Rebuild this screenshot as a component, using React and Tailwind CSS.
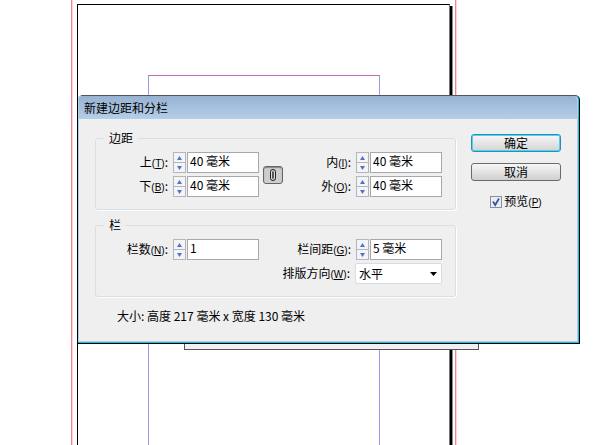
import React from "react";

function Arrow({ down }) {
  return (
    <svg viewBox="0 0 7 4" width="7" height="4" aria-hidden="true">
      <path d={down ? "M1 0H6L3.5 4Z" : "M1 4H6L3.5 0Z"} fill="#5272c4" />
    </svg>
  );
}

function Label({ htmlFor, text, hotkey, colon = true }) {
  return (
    <label htmlFor={htmlFor} className="flex items-baseline whitespace-nowrap">
      {text}
      <span className="font-['Liberation_Sans',sans-serif] text-[10px]">
        (<u>{hotkey}</u>)
      </span>
      {colon && ":"}
    </label>
  );
}

function SpinField({ id, text, hotkey, value }) {
  return (
    <div className="flex items-center justify-end gap-[5px]">
      <Label htmlFor={id} text={text} hotkey={hotkey} />
      <div className="flex h-[21px] gap-px">
        <div className="flex w-[13px] flex-col border border-[#b3b6bd] bg-[#f4f4f6]">
          <button
            type="button"
            aria-label="+"
            className="flex flex-1 items-center justify-center border-b border-[#b3b6bd]"
          >
            <Arrow />
          </button>
          <button
            type="button"
            aria-label="-"
            className="flex flex-1 items-center justify-center"
          >
            <Arrow down />
          </button>
        </div>
        <input
          id={id}
          type="text"
          defaultValue={value}
          className="w-[72px] border border-[#a6a8ad] bg-white pb-[3px] pl-[2px] outline-none"
        />
      </div>
    </div>
  );
}

function Group({ title, children }) {
  return (
    <fieldset className="flex h-20 rounded-[3px] border border-[#d5dfe5] pl-2 pr-[13px] shadow-[1px_1px_0_#fff]">
      <legend className="px-[5px] leading-4">{title}</legend>
      <div className="flex flex-1 items-start pt-[6px]">{children}</div>
    </fieldset>
  );
}

function DocumentPage() {
  return (
    <div className="absolute inset-0" aria-hidden="true">
      <div className="absolute inset-y-0 left-[71px] w-[385px] border-x border-[#ee8592] shadow-[inset_1px_0_0_#fbd3d8,1px_0_0_#fbd3d8]" />
      <div className="absolute bottom-0 left-[450px] top-[6px] w-[3px] border-r border-[#8a8a8a] bg-black" />
      <div className="absolute bottom-0 left-[77px] top-1 w-[373px] border-x border-t border-black border-r-[#777] bg-white" />
      <div className="absolute bottom-0 left-[148px] top-[75px] w-[232px] border-x border-t border-x-[#9a9af0] border-t-[#c868b0]" />
      <div className="absolute left-[184px] top-[340px] h-[10px] w-[295px] border border-[#555] bg-[#f0f0f0]" />
    </div>
  );
}

export default function App() {
  return (
    <main className="relative min-h-screen overflow-hidden bg-white font-['Noto_Sans_CJK_SC',sans-serif] text-[12px] leading-4 text-black">
      <DocumentPage />
      <form className="absolute left-[78px] right-5 top-[95px] rounded-t-[5px] border-b border-r border-t border-black border-t-[#555] bg-[#15bde0] pb-px pr-px">
        <div className="overflow-hidden rounded-t-[4px] border-x border-b border-[#b4cfe8] bg-[#efefef]">
          <h1 className="h-[23px] bg-linear-to-b from-[#97b2d1] to-[#b5cfea] pl-[5px] leading-[24px]">
            新建边距和分栏
          </h1>
          <div className="flex px-4 pb-[17px] pt-[11px]">
            <div className="flex flex-1 flex-col gap-[7px]">
              <Group title="边距">
                <div className="flex w-[155px] flex-col gap-[3px]">
                  <SpinField id="top" text="上" hotkey="T" value="40 毫米" />
                  <SpinField id="bottom" text="下" hotkey="B" value="40 毫米" />
                </div>
                <button
                  type="button"
                  aria-label="链接"
                  className="ml-1 mt-[14px] flex h-[18px] w-5 items-center justify-center rounded-[3px] border border-[#666] bg-[#cdcdcd] shadow-[inset_0_1px_1px_#888]"
                >
                  <svg viewBox="0 0 8 14" width="8" height="14" fill="none">
                    <path
                      d="M1.5 8V3.5Q1.5 1.5 4 1.5T6.5 3.5V8M1.5 6V10.5Q1.5 12.5 4 12.5T6.5 10.5V6"
                      stroke="#222"
                    />
                    <path d="M3 4V10M5 4V10" stroke="#eee" />
                    <path d="M4 3.5V10.5" stroke="#000" strokeWidth="1.2" />
                  </svg>
                </button>
                <div className="flex flex-1 flex-col gap-[3px]">
                  <SpinField id="inside" text="内" hotkey="I" value="40 毫米" />
                  <SpinField id="outside" text="外" hotkey="O" value="40 毫米" />
                </div>
              </Group>
              <Group title="栏">
                <div className="w-[155px]">
                  <SpinField id="columns" text="栏数" hotkey="N" value="1" />
                </div>
                <div className="flex flex-1 flex-col gap-[3px]">
                  <SpinField id="gutter" text="栏间距" hotkey="G" value="5 毫米" />
                  <div className="flex items-center justify-end gap-[5px]">
                    <Label htmlFor="direction" text="排版方向" hotkey="W" />
                    <div className="relative">
                      <select
                        id="direction"
                        className="block h-[21px] w-[87px] appearance-none rounded-[2px] border border-[#d5dde5] bg-white pl-[3px] outline-none"
                      >
                        <option>水平</option>
                      </select>
                      <svg
                        viewBox="0 0 7 4"
                        width="7"
                        height="4"
                        className="pointer-events-none absolute right-[5px] top-[9px]"
                      >
                        <path d="M0 0H7L3.5 4Z" fill="#000" />
                      </svg>
                    </div>
                  </div>
                </div>
              </Group>
              <p className="pl-[22px] pt-1">大小: 高度 217 毫米 x 宽度 130 毫米</p>
            </div>
            <div className="ml-[15px] flex w-[90px] flex-col items-center pt-1">
              <button
                type="submit"
                className="h-[18px] w-full rounded-[3px] border border-[#2b8fb5] bg-linear-to-b from-[#f7f7f7] to-[#d4d4d4] leading-none shadow-[inset_0_0_0_1px_#4cd3f3]"
              >
                确定
              </button>
              <button
                type="button"
                className="mt-[11px] h-[18px] w-full rounded-[3px] border border-[#6b6b6b] bg-linear-to-b from-[#f7f7f7] to-[#cfcfcf] leading-none"
              >
                取消
              </button>
              <div className="mt-3 flex items-center gap-[2px]">
                <span className="relative size-3">
                  <input
                    id="preview"
                    type="checkbox"
                    defaultChecked
                    className="block size-3 appearance-none border border-[#8a8f9a] bg-[#e9edf5]"
                  />
                  <svg
                    viewBox="0 0 12 12"
                    className="pointer-events-none absolute inset-0 size-3"
                    fill="none"
                  >
                    <path d="M3 5.5L5.2 9L9 2.5" stroke="#40559c" strokeWidth="1.8" />
                  </svg>
                </span>
                <Label htmlFor="preview" text="预览" hotkey="P" colon={false} />
              </div>
            </div>
          </div>
        </div>
      </form>
    </main>
  );
}
